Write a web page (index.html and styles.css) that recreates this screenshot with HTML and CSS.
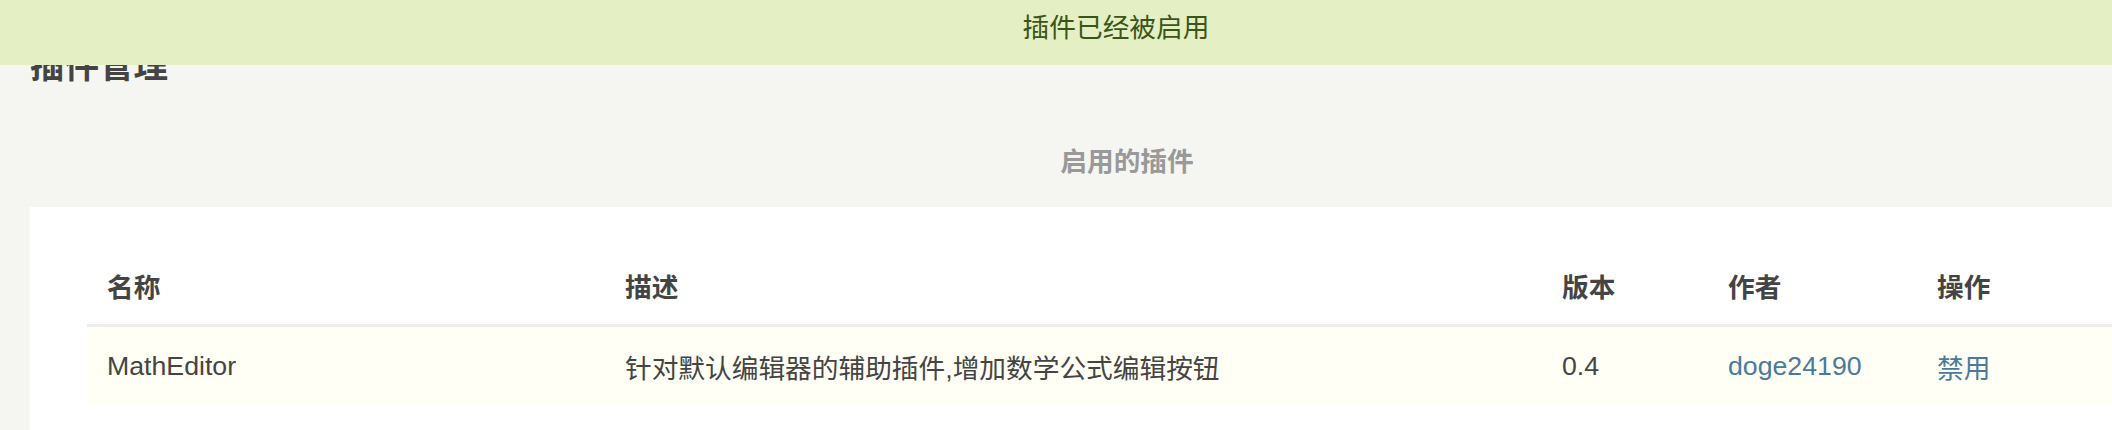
FILE: index.html
```html
<!DOCTYPE html>
<html lang="zh-CN">
<head>
<meta charset="utf-8">
<title>插件管理</title>
<link rel="stylesheet" href="styles.css">
</head>
<body>
<div class="page">
  <div class="notice">插件已经被启用</div>
  <h1 class="title">插件管理</h1>
  <h2 class="section-title">启用的插件</h2>
  <div class="card">
    <table class="plugins">
      <colgroup>
        <col class="c-name"><col class="c-desc"><col class="c-ver"><col class="c-author"><col class="c-op">
      </colgroup>
      <thead>
        <tr><th>名称</th><th>描述</th><th>版本</th><th>作者</th><th>操作</th></tr>
      </thead>
      <tbody>
        <tr>
          <td>MathEditor</td>
          <td>针对默认编辑器的辅助插件,增加数学公式编辑按钮</td>
          <td>0.4</td>
          <td><a class="link" href="#">doge24190</a></td>
          <td><a class="link" href="#">禁用</a></td>
        </tr>
      </tbody>
    </table>
  </div>
</div>
</body>
</html>
```

FILE: styles.css
```css
html, body {
  margin: 0;
  padding: 0;
  background: #f5f6f1;
  overflow: hidden;
}
body {
  font-family: "Liberation Sans", "Noto Sans CJK SC", sans-serif;
  color: #444;
  font-size: 26.7px;
}
.page {
  position: relative;
  padding: 46px 0 0 30px;
}
.notice {
  position: absolute;
  top: 0;
  left: 0;
  right: 0;
  height: 65px;
  line-height: 57px;
  padding-left: 120px;
  background: #e4f0c3;
  color: #3b5518;
  text-align: center;
  font-size: 26.7px;
}
.title {
  margin: 0;
  font-size: 34.5px;
  line-height: 41px;
  font-weight: bold;
  color: #444;
}
.section-title {
  margin: 55px 0 25px;
  padding-left: 112px;
  font-size: 26.7px;
  line-height: 40px;
  font-weight: bold;
  color: #999;
  text-align: center;
}
.card {
  background: #fff;
  padding: 40px 0 40px 57px;
}
.plugins {
  width: 100%;
  border-collapse: collapse;
  table-layout: fixed;
}
.c-name { width: 518px; }
.c-desc { width: 937px; }
.c-ver { width: 166px; }
.c-author { width: 209px; }
.plugins th {
  text-align: left;
  font-weight: bold;
  color: #444;
  height: 77px;
  padding: 0 20px;
  border-bottom: 3px solid #eeeeec;
  vertical-align: middle;
}
.plugins td {
  height: 78px;
  padding: 0 20px;
  background: #fffff5;
  vertical-align: middle;
  color: #444;
}
.link {
  color: #4a7a9b;
  text-decoration: none;
}
```
